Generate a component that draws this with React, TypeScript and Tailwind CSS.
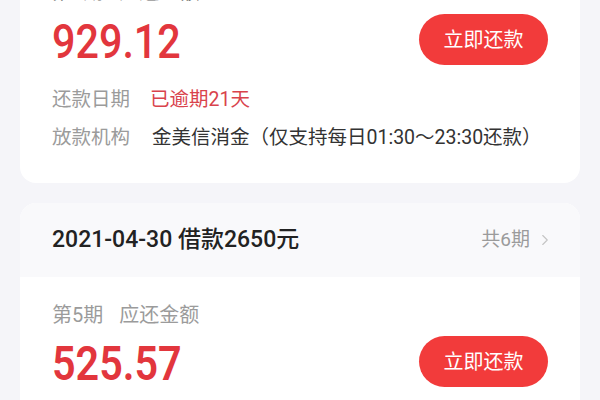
import { ChevronRight } from 'lucide-react';

const font = "font-['Roboto','Noto_Sans_CJK_SC',sans-serif]";

function PayButton() {
  return (
    <button className="h-[51px] w-[129px] shrink-0 rounded-full bg-[#f23b3b] text-[20px] leading-none text-white">
      立即还款
    </button>
  );
}

function Amount({ value, bold }: { value: string; bold?: boolean }) {
  return (
    <div
      className={`inline-block origin-left scale-x-[0.86] text-[48px] leading-[56px] text-[#e2363d] ${
        bold ? 'font-semibold' : 'font-medium'
      }`}
    >
      {value}
    </div>
  );
}

export default function App() {
  return (
    <div className={`h-[400px] w-[600px] overflow-hidden bg-[#f5f5f9] px-5 ${font}`}>
      <div className="-mt-[50px] rounded-[16px] bg-white px-8 pb-[31px] pt-[30px]">
        <div className="text-[20px] leading-[24px] text-[#666]">
          第6期<span className="ml-4">应还金额</span>
        </div>
        <div className="mt-[10px] flex items-start justify-between">
          <Amount value="929.12" />
          <PayButton />
        </div>
        <div className="mt-[16px] flex h-[28px] items-center text-[19.5px]">
          <span className="w-[98px] text-[#9b9b9b]">还款日期</span>
          <span className="text-[#d9434c]">已逾期21天</span>
        </div>
        <div className="mt-[10px] flex h-[28px] items-center text-[19.5px]">
          <span className="w-[100px] text-[#9b9b9b]">放款机构</span>
          <span className="text-[#333]">金美信消金（仅支持每日01:30～23:30还款）</span>
        </div>
      </div>

      <div className="mt-5 overflow-hidden rounded-[16px] bg-white">
        <div className="flex h-[74px] items-center justify-between bg-[#f9f9fb] pl-8 pr-[26px]">
          <span className="text-[23px] font-medium text-[#222]">2021-04-30 借款2650元</span>
          <span className="flex items-center gap-[6px] text-[19px] text-[#9b9b9b]">
            共6期
            <ChevronRight size={18} strokeWidth={1.5} className="text-[#c4c4c4]" />
          </span>
        </div>
        <div className="px-8 pt-[26px] pb-8">
          <div className="text-[20px] leading-[24px] text-[#9b9b9b]">
            第5期<span className="ml-4">应还金额</span>
          </div>
          <div className="mt-[9px] flex items-start justify-between">
            <Amount value="525.57" bold />
            <PayButton />
          </div>
        </div>
      </div>
    </div>
  );
}
